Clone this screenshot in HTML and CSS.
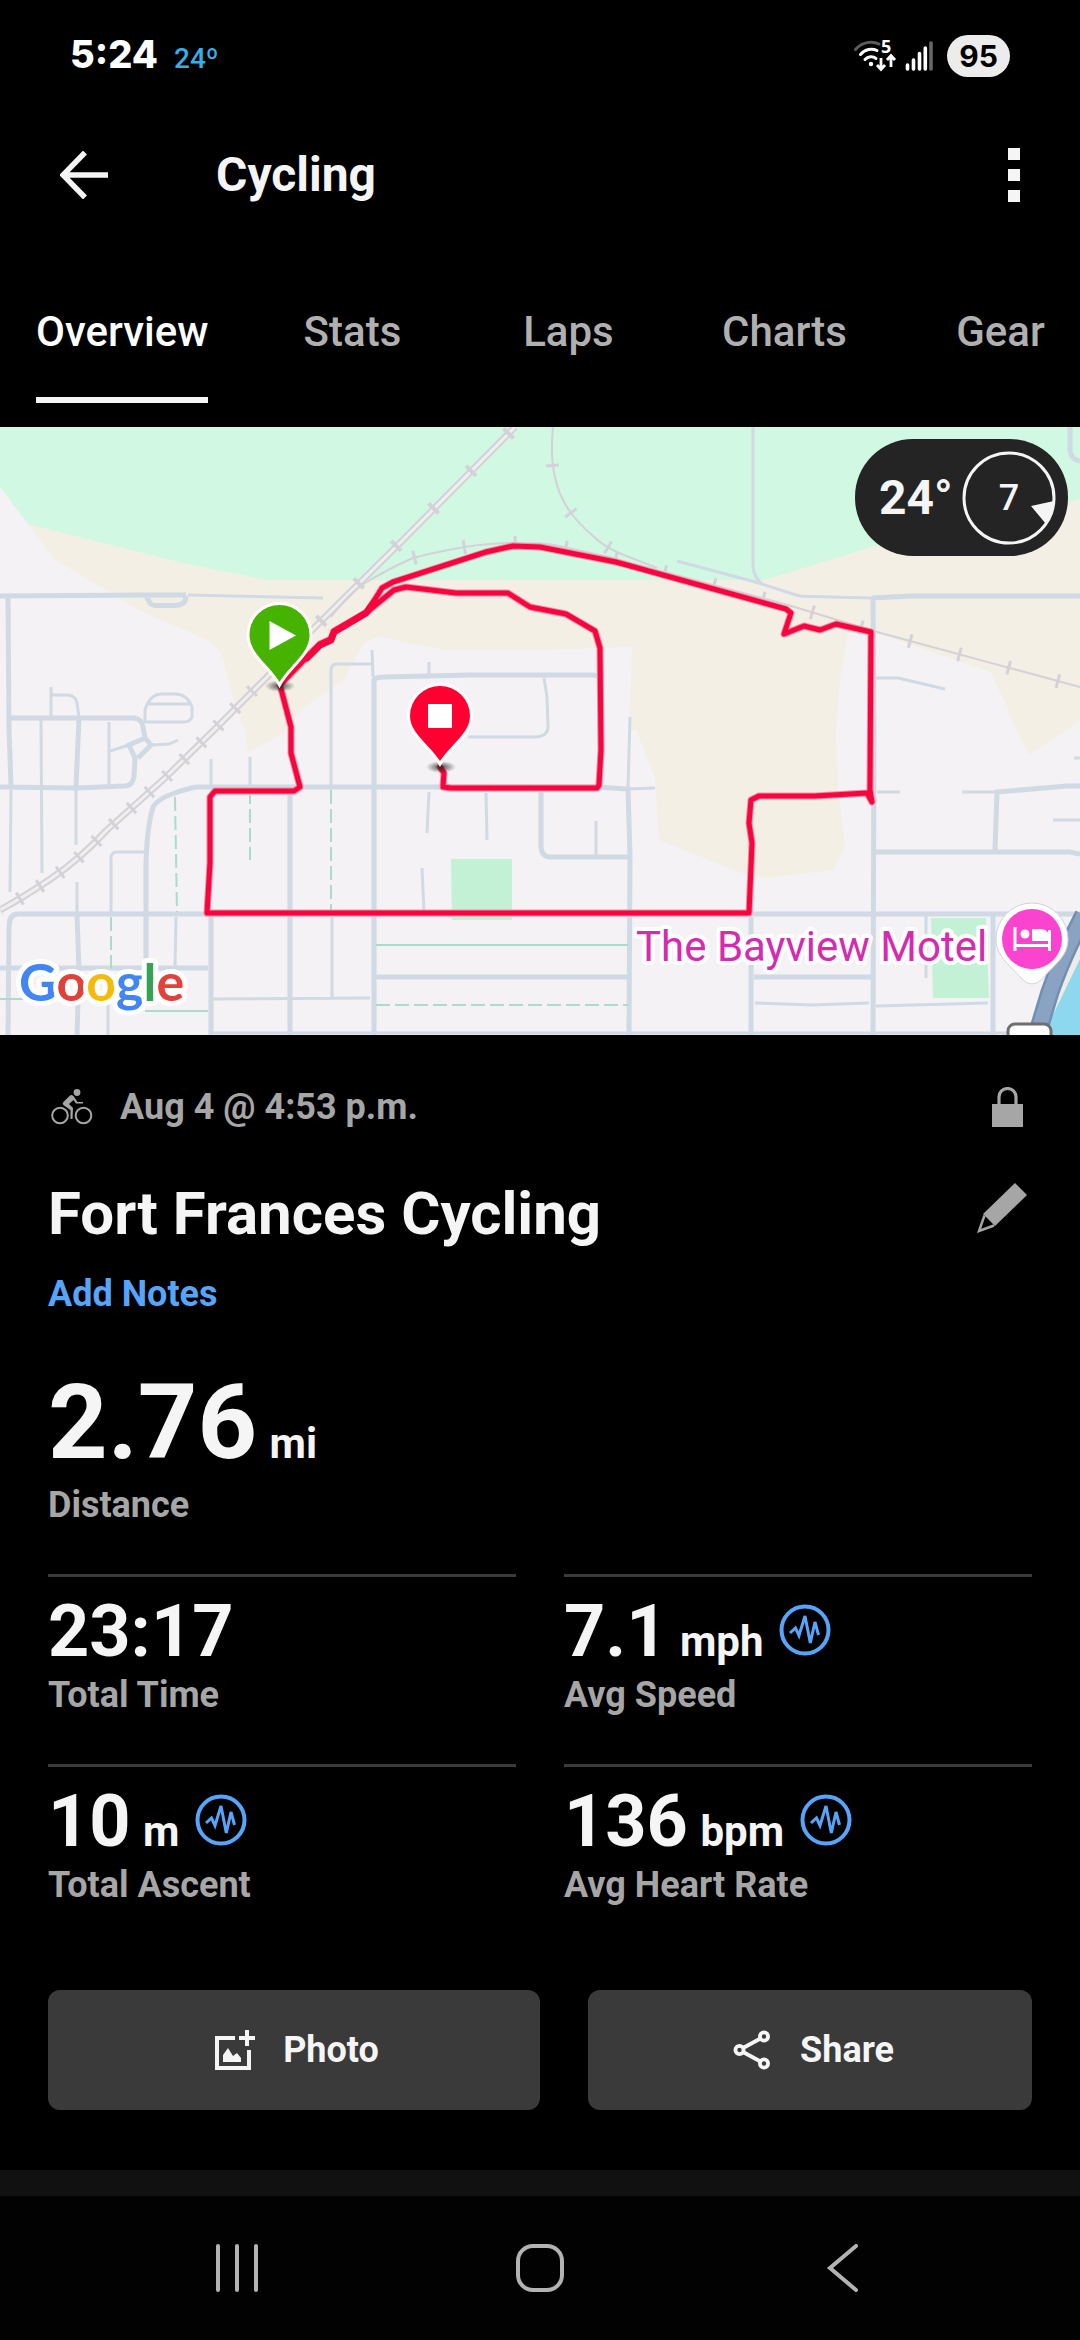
FILE: index.html
```html
<!DOCTYPE html>
<html lang="en">
<head>
<meta charset="utf-8">
<meta name="viewport" content="width=device-width, initial-scale=1">
<title>Cycling</title>
<link rel="stylesheet" href="styles.css">
</head>
<body>
<svg class="defs" aria-hidden="true">
  <symbol id="wave" viewBox="0 0 52 52">
    <circle cx="26" cy="26" r="23.5" fill="none" stroke="currentColor" stroke-width="4"/>
    <path d="M11 29l5.500-5 3.500 7.500L26 12l5.300 27 4.700-21 3.500 13" fill="none" stroke="currentColor" stroke-width="3" stroke-linejoin="miter" stroke-miterlimit="3"/>
  </symbol>
</svg>

<div class="status-bar">
  <div class="status-left">
    <span class="clock">5:24</span>
    <span class="status-temp">24º</span>
  </div>
  <div class="status-right">
    <svg class="wifi" viewBox="0 0 42 32" aria-hidden="true">
      <path d="M1.500 9.500C8 2 18 .5 25 4" fill="none" stroke="#5c5c5c" stroke-width="3" stroke-linecap="round"/>
      <g fill="none" stroke="#fff" stroke-width="3" stroke-linecap="round">
        <path d="M6.500 14.500C11 9 18 8 23 10.500"/>
        <path d="M11 19.500c3-3.500 8-3.500 11-1"/>
      </g>
      <circle cx="17" cy="24" r="2.200" fill="#fff"/>
      <path d="M27 18v11m-4-4l4 4.500 4-4.500M37 27V16m-4 4l4-4.500 4 4.500" fill="none" stroke="#fff" stroke-width="2.800"/>
      <text class="wifi-band" x="27" y="13">5</text>
    </svg>
    <svg class="signal" viewBox="0 0 28 30" aria-hidden="true">
      <path d="M2.500 24v4M8.500 19v9M14.500 12.500V28M20.300 7v21" stroke="#fff" stroke-width="3.600" stroke-linecap="round"/>
      <path d="M26 2v26" stroke="#666" stroke-width="3.600" stroke-linecap="round"/>
    </svg>
    <span class="battery">95</span>
  </div>
</div>

<header class="app-bar">
  <button class="icon-button" type="button" aria-label="Back">
    <svg class="icon-back" viewBox="0 0 48 48"><path d="M25 1.500L3 24l22 22.500M3 24h45" fill="none" stroke="currentColor" stroke-width="5.500"/></svg>
  </button>
  <h1 class="screen-title">Cycling</h1>
  <button class="icon-button" type="button" aria-label="More options">
    <svg class="icon-more" viewBox="0 0 12 54"><path d="M0 0h12v12H0zM0 21h12v12H0zM0 42h12v12H0z" fill="currentColor"/></svg>
  </button>
</header>

<nav class="tabs">
  <a class="tab tab-active" href="#overview" aria-current="page"><span class="tab-label">Overview</span></a>
  <a class="tab" href="#stats"><span class="tab-label">Stats</span></a>
  <a class="tab" href="#laps"><span class="tab-label">Laps</span></a>
  <a class="tab" href="#charts"><span class="tab-label">Charts</span></a>
  <a class="tab" href="#gear"><span class="tab-label">Gear</span></a>
</nav>

<main id="overview">
  <section class="map" aria-label="Route map">
    <svg class="map-canvas" viewBox="0 0 1080 608">
      <defs>
        <radialGradient id="shadow"><stop offset="0" stop-color="#222" stop-opacity=".8"/><stop offset="1" stop-color="#222" stop-opacity="0"/></radialGradient>
      </defs>
      <rect width="1080" height="608" fill="#f4f2f4"/>
      <!-- land cover -->
      <path fill="#f4efe4" d="M28 97L55 133 103 161 138 183 203 211 Q220 220 224 236L234 276 245 303 248 325 289 303 300 283 344 253 358 226Q366 212 379 210L444 223H540L632 220 629 303H636L655 350 659 413 747 448 767 451 833 443 845 420 838 360 836 303 840 253 848 206H876L991 245 1017 303 1029 328 1067 303 1080 293V60H872L764 140H275L183 130Z"/>
      <path fill="#d1f8e2" d="M0 0H1080V72L872 120 764 153H290Q275 154 262 152L183 136 28 97 0 60Z"/>
      <path fill="#c3f1d5" d="M451 432H512V493H452ZM931 491H986L989 571H933Z"/>
      <!-- narrow streets -->
      <g class="street-thin">
        <path d="M188 168L323 171M51 260V290M51 268H68Q76 269 77 276L79 290M145 296V283Q150 267 162 267H176Q188 268 192 280V290Q190 295 184 295H145M146 277H190"/>
        <path d="M76 360V418M41 293L42 446M109 295V358M11 363L10 465M151 318L169 317 178 313M129 318L110 324"/>
        <path d="M331 358V243Q331 237 337 237H372M372 223L373 250M429 235V248M626 362L655 361M211 332V358M250 330V360"/>
        <path d="M77 455V487M144 425H117Q111 425 111 431V485M176 490L175 540M332 490V570M212 572L370 571M108 576V608"/>
        <path d="M429 365L427 406M486 366L487 413M422 441L424 485M596 394V430M630 290L628 361M468 310H536Q548 309 548 300L547 270 544 251"/>
        <path d="M677 134L759 156 796 168Q803 170 812 169.500L872 171M753 0V140Q754 150 761 156M876 251H898L945 262M877 365H900M962 365H996"/>
        <path d="M1053 393H1080M1074 331H1080M755 576L812 578 869 576M876 579L988 576M926 487V551M211 606H1080"/>
      </g>
      <!-- wide streets -->
      <g class="street">
        <path d="M0 169L150 168H186M146 169L150 176Q151 178 155 178.500H175Q186 178 186 169M8 169L9 303 11 358M10 291H134Q142 292 143 300L145 311 151 318 138 331M145 311L129 318 135 331 134 350Q132 359 125 359L76 361 0 360M79 291L76 360"/>
        <path d="M374 608V253Q376 250 384 250L470 248H593Q600 249 602 251M146 541V436Q147 400 153 380Q158 372 172 367T196 360H597L628 362 630 430 629 608"/>
        <path d="M8 608L9 500Q9 487 18 487H207M77 488L79 543 77 608M0 541H208M290 361V608M211 487V608M374 550H628M541 365V420Q542 430 550 430H628"/>
        <path d="M873 171L874 303 873 608M872 171L912 169H1080M1070 0V23Q1071 33 1080 34M995 423L997 365 1067 359H1080M876 425H1070L1080 427M751 490V608M993 487V608M754 550H871M750 487H1080"/>
      </g>
      <!-- trails -->
      <path d="M175 370L177 485M250 363V433M331 363V485M111 490V541M376 578H628" fill="none" stroke="#a9dcc9" stroke-width="2" stroke-dasharray="14 5"/>
      <path d="M376 518H628M145 584H208M0 572H62" fill="none" stroke="#a9dcc9" stroke-width="2"/>
      <!-- railways -->
      <path class="rail" stroke-width="7" d="M515 0L401 115 312 203 267 250 212 305 165 351 107 403Q80 432 52 451T0 483"/>
      <path d="M515 0L401 115 312 203 267 250 212 305 165 351 107 403Q80 432 52 451T0 483" fill="none" stroke="#eef0ee" stroke-width="3"/>
      <g class="rail" stroke-width="2">
        <path d="M331 190Q350 165 365 156 388 142 413 131 440 124 465 120T517 116 554 118L609 130 657 143 788 178 877 205 1080 260"/>
        <path d="M553 0Q550 30 555 50 559 70 571 86 580 98 592 108 603 119 619 126L657 141"/>
      </g>
      <g class="rail" stroke-width="14">
        <path d="M510 5L315 200" stroke-dasharray="4 49"/>
        <path d="M253 263L212 305 165 351 107 403Q80 432 52 451T0 483" stroke-dasharray="3 21"/>
        <path d="M413 131Q440 124 465 120T517 116 554 118L609 130 657 143 788 178 877 205 1080 260" stroke-dasharray="3 48"/>
        <path d="M555 50Q559 70 571 86 580 98 592 108 603 119 619 126" stroke-dasharray="3 48" stroke-dashoffset="-38"/>
        <path d="M546 39L559 38" stroke-width="3"/>
      </g>
      <!-- river and bridge road -->
      <path fill="#f0ebe3" d="M1080 510V540L1046 608H1040Z"/>
      <path fill="#8dd8ee" d="M1080 532V608H1043L1050 594Z"/>
      <path d="M1084 488Q1062 530 1050 565L1037 608" fill="none" stroke="#6f8fb4" stroke-width="19"/>
      <path d="M1084 488Q1062 530 1050 565L1037 608" fill="none" stroke="#8ba3c3" stroke-width="14"/>
      <rect x="1008" y="597" width="43" height="30" rx="7" fill="#fff" stroke="#6f6f70" stroke-width="3"/>
      <!-- recorded route -->
      <g fill="none" stroke-linejoin="round" stroke-linecap="round">
        <path stroke="#f98aa5" stroke-width="7" d="M280 258L291 300V326L300 360 294 364H215L210 370V436L207 486H749L752 416 749 396 751 373 759 369H815L867 366 872 375 870 363 871 205 836 197 820 203 804 199 784 207 791 186 786 182 616 135 540 120 513 119 486 125 393 155 382 161 367 185 334 204 331 212 320 217 307 230 280 258M367 185L394 163 406 160 456 166 508 166 530 180 566 187 595 204 600 221 601 323 599 358 597 361H451L443 360 444 346 440 340"/>
        <path stroke="#f5063e" stroke-width="5" d="M280 258L291 300V326L300 360 294 364H215L210 370V436L207 486H749L752 416 749 396 751 373 759 369H815L867 366 872 375 870 363 871 205 836 197 820 203 804 199 784 207 791 186 786 182 616 135 540 120 513 119 486 125 393 155 382 161 367 185 334 204 331 212 320 217 307 230 280 258M367 185L394 163 406 160 456 166 508 166 530 180 566 187 595 204 600 221 601 323 599 358 597 361H451L443 360 444 346 440 340"/>
        <path stroke="#f5063e" stroke-width="7" d="M375 174L366 186 334 205 331 213 320 218 307 231"/>
      </g>
      <!-- start and finish markers -->
      <ellipse cx="280" cy="259" rx="15" ry="6" fill="url(#shadow)"/>
      <path d="M279.500 258C270 240 248 228 248 208A31.500 31.500 0 0 1 311 208C311 228 289 240 279.500 258Z" fill="#45b300" stroke="#fff" stroke-width="3"/>
      <path d="M269.500 194V223L296 208.500Z" fill="#fff"/>
      <ellipse cx="441" cy="340" rx="15" ry="6" fill="url(#shadow)"/>
      <path d="M440 337C430.500 320 408.500 308 408.500 289A31.500 31.500 0 0 1 471.500 289C471.500 308 449.500 320 440 337Z" fill="#ff0030" stroke="#fff" stroke-width="3"/>
      <path d="M428 277H452V301H428Z" fill="#fff"/>
      <!-- place label -->
      <path d="M1032 476a36 36 0 0 1 36 36c0 17-12 24-25 39q-11 12-22 0c-13-15-25-22-25-39a36 36 0 0 1 36-36Z" fill="#fff" stroke="#cfd3d8" stroke-width="1"/>
      <circle cx="1032" cy="512" r="30" fill="#fa43ce"/>
      <path d="M1015 500V524M1015 518.500H1049M1049.500 503V524" stroke="#fff" stroke-width="3" fill="none"/>
      <circle cx="1025" cy="507" r="4.500" fill="#fff"/>
      <path d="M1032 502H1042Q1050 503 1050 514H1032Z" fill="#fff"/>
      <text class="place-name" x="636" y="534">The Bayview Motel</text>
      <text class="map-brand" x="19" y="574"><tspan fill="#4285f4">G</tspan><tspan fill="#e0413a">o</tspan><tspan fill="#f5bb0b">o</tspan><tspan fill="#4285f4">g</tspan><tspan fill="#34a353">l</tspan><tspan fill="#e0413a">e</tspan></text>
    </svg>
    <div class="weather">
      <span class="weather-temp">24°</span>
      <span class="wind">
        <svg class="wind-dial" viewBox="0 0 94 94" aria-hidden="true">
          <circle cx="47" cy="47" r="45" fill="none" stroke="#f5f5f5" stroke-width="3"/>
          <path d="M69 55L92 50Q91 63 84 73Z" fill="#f5f5f5"/>
        </svg>
        <span class="wind-speed">7</span>
      </span>
    </div>
  </section>

  <section class="summary">
    <div class="date-row">
      <svg class="icon-bike" viewBox="0 0 42 36" aria-hidden="true">
        <g fill="none" stroke="currentColor" stroke-width="2"><circle cx="9" cy="26.500" r="7.800"/><circle cx="32.500" cy="26.500" r="7.800"/></g>
        <circle cx="26" cy="3.500" r="3.400" fill="currentColor"/>
        <path d="M19 6.500L12 13.500Q11 15 13 16.500L19.500 21V30H21.500L22 19 18 15 22.500 11 25 14.500H32V13H26.500L22.500 7Q20.500 5.500 19 6.500Z" fill="currentColor"/>
      </svg>
      <time class="date">Aug 4 @ 4:53 p.m.</time>
      <svg class="icon-lock" viewBox="0 0 31 40" role="img" aria-label="Private">
        <path d="M0 17H31V40H0Z" fill="currentColor"/>
        <path d="M7 18V10a8.500 8.500 0 0 1 17 0v8" fill="none" stroke="currentColor" stroke-width="3.200"/>
      </svg>
    </div>
    <div class="title-row">
      <h2 class="activity-title">Fort Frances Cycling</h2>
      <button class="icon-button" type="button" aria-label="Edit title">
        <svg class="icon-edit" viewBox="0 0 50 50">
          <path d="M38 0L50 12 18 43 6 31Z" fill="currentColor"/>
          <path d="M7.500 32.500L2 48 17 42.500" fill="none" stroke="currentColor" stroke-width="2.500"/>
        </svg>
      </button>
    </div>
    <a class="add-notes" href="#notes">Add Notes</a>

    <div class="distance">
      <div class="value value-large">2.76<span class="unit"> mi</span></div>
      <div class="label">Distance</div>
    </div>

    <div class="stats-grid">
      <div class="stat">
        <div class="value">23:17</div>
        <div class="label">Total Time</div>
      </div>
      <div class="stat">
        <div class="value">7.1<span class="unit"> mph</span><svg class="icon-wave"><use href="#wave"/></svg></div>
        <div class="label">Avg Speed</div>
      </div>
      <div class="stat">
        <div class="value">10<span class="unit"> m</span><svg class="icon-wave"><use href="#wave"/></svg></div>
        <div class="label">Total Ascent</div>
      </div>
      <div class="stat">
        <div class="value">136<span class="unit"> bpm</span><svg class="icon-wave"><use href="#wave"/></svg></div>
        <div class="label">Avg Heart Rate</div>
      </div>
    </div>

    <div class="actions">
      <button class="action" type="button">
        <svg class="icon-action" viewBox="0 0 40 40" aria-hidden="true">
          <path d="M20 8H2V38H34V20M32 0V16M24 8H40" fill="none" stroke="currentColor" stroke-width="4"/>
          <path d="M8 32V25L13 18 18 26 22 23 26 28V32Z" fill="currentColor"/>
        </svg>
        Photo
      </button>
      <button class="action" type="button">
        <svg class="icon-action" viewBox="0 0 40 40" aria-hidden="true">
          <g fill="none" stroke="currentColor" stroke-width="3.800"><circle cx="7.500" cy="20" r="4.100"/><circle cx="32" cy="6.500" r="4.100"/><circle cx="32" cy="33.500" r="4.100"/><path d="M11 18L28.500 8.500M11 22L28.500 31.500"/></g>
        </svg>
        Share
      </button>
    </div>
  </section>
</main>

<div class="section-gap"></div>

<nav class="system-nav" aria-label="System">
  <button class="nav-button" type="button" aria-label="Recent apps">
    <svg class="icon-nav" viewBox="0 0 48 48"><path d="M5 2V46M24 2V46M43 2V46" stroke="currentColor" stroke-width="4" stroke-linecap="round"/></svg>
  </button>
  <button class="nav-button" type="button" aria-label="Home">
    <svg class="icon-nav" viewBox="0 0 48 48"><rect x="2" y="2" width="44" height="44" rx="15" fill="none" stroke="currentColor" stroke-width="4"/></svg>
  </button>
  <button class="nav-button" type="button" aria-label="Back">
    <svg class="icon-nav" viewBox="0 0 48 48"><path d="M37 2L11 24 37 46" fill="none" stroke="currentColor" stroke-width="4" stroke-linecap="round"/></svg>
  </button>
</nav>
</body>
</html>
```
FILE: styles.css
```css
* {
  box-sizing: border-box;
}

body {
  margin: 0;
  background: #000;
  color: #f5f5f5;
  font-family: Roboto, "Liberation Sans", sans-serif;
  font-size: 36px;
  line-height: 42px;
}

h1,
h2 {
  margin: 0;
}

a {
  text-decoration: none;
}

button {
  padding: 0;
  border: 0;
  background: none;
  color: inherit;
  font: inherit;
}

svg {
  display: block;
}

.defs {
  position: absolute;
  width: 0;
  height: 0;
}

/* Status bar */
.status-bar {
  display: flex;
  justify-content: space-between;
  align-items: center;
  height: 112px;
  padding: 0 70px;
}

.status-left {
  display: flex;
  align-items: baseline;
  gap: 16px;
}

.clock {
  color: #fff;
  font-family: Inter, sans-serif;
  font-size: 38px;
  font-weight: 800;
}

.status-temp {
  color: #38aee6;
  font-size: 28px;
  font-weight: 500;
}

.status-right {
  display: flex;
  align-items: center;
}

.wifi {
  width: 42px;
  height: 32px;
  overflow: visible;
}

.wifi-band {
  fill: #fff;
  font-family: "Noto Sans", sans-serif;
  font-size: 18px;
  font-weight: 700;
}

.signal {
  width: 28px;
  height: 30px;
  margin: 0 14px 0 9px;
}

.battery {
  width: 63px;
  border-radius: 21px;
  background: #ececec;
  color: #000;
  font-family: Inter, sans-serif;
  font-size: 30px;
  font-weight: 700;
  text-align: center;
}

/* App bar */
.app-bar {
  display: flex;
  align-items: center;
  height: 126px;
  padding: 0 60px;
}

.icon-back {
  width: 48px;
  height: 48px;
}

.screen-title {
  flex: 1;
  margin-left: 108px;
  font-size: 48px;
  font-weight: 700;
  line-height: 60px;
}

.icon-more {
  width: 12px;
  height: 54px;
}

/* Tabs */
.tabs {
  display: flex;
  padding-bottom: 24px;
  overflow: hidden;
}

.tab {
  display: flex;
  flex: none;
  justify-content: center;
  min-width: 216px;
  padding: 0 36px;
  color: #b0b0b0;
  font-size: 42px;
  font-weight: 500;
  line-height: 48px;
}

.tab-label {
  padding: 70px 0 41px;
  border-bottom: 6px solid transparent;
}

.tab-active {
  color: #fff;
}

.tab-active .tab-label {
  border-color: #f5f5f5;
}

/* Map */
.map {
  position: relative;
}

.map-canvas {
  width: 100%;
  height: auto;
}

.street,
.street-thin {
  fill: none;
  stroke: #d0dae4;
  stroke-width: 5;
}

.street-thin {
  stroke-width: 3;
}

.rail {
  fill: none;
  stroke: #d4d1d8;
}

.place-name {
  fill: #d42bb0;
  stroke: #fff;
  stroke-width: 8;
  stroke-linejoin: round;
  paint-order: stroke;
  font-size: 42px;
}

.map-brand {
  stroke: #fff;
  stroke-width: 10;
  stroke-linejoin: round;
  paint-order: stroke;
  font-family: Lato, sans-serif;
  font-size: 52px;
  font-weight: 700;
}

.weather {
  position: absolute;
  top: 12px;
  right: 12px;
  display: flex;
  align-items: center;
  justify-content: space-between;
  width: 213px;
  height: 117px;
  padding: 0 12px 0 24px;
  border-radius: 58px;
  background: #242424;
}

.weather-temp {
  font-size: 48px;
  font-weight: 700;
}

.wind {
  position: relative;
  display: grid;
  place-items: center;
}

.wind-dial {
  width: 94px;
  height: 94px;
}

.wind-speed {
  position: absolute;
  font-size: 36px;
  font-weight: 500;
}

/* Activity summary */
.summary {
  padding: 48px 48px 60px;
}

.date-row {
  display: flex;
  align-items: center;
  height: 48px;
  padding: 0 9px 0 3px;
  color: #a6a6a6;
}

.icon-bike {
  width: 42px;
  height: 36px;
}

.date {
  flex: 1;
  margin-left: 27px;
  font-weight: 700;
}

.icon-lock {
  width: 31px;
  height: 40px;
}

.title-row {
  display: flex;
  align-items: center;
  justify-content: space-between;
  margin-top: 47px;
  padding-right: 5px;
}

.title-row .icon-button {
  padding-bottom: 12px;
}

.activity-title {
  font-size: 60px;
  font-weight: 700;
  line-height: 72px;
}

.icon-edit {
  width: 50px;
  height: 50px;
  color: #a6a6a6;
}

.add-notes {
  display: block;
  margin-top: 23px;
  color: #57a5fa;
  font-weight: 700;
}

.distance {
  margin-top: 47px;
}

.value {
  font-size: 72px;
  font-weight: 700;
  line-height: 84px;
  white-space: nowrap;
}

.value-large {
  font-size: 104px;
  line-height: 122px;
}

.unit {
  margin-left: 2px;
  font-size: 42px;
  line-height: 42px;
}

.label {
  color: #a6a6a6;
  font-weight: 700;
}

.icon-wave {
  display: inline-block;
  width: 52px;
  height: 52px;
  margin-left: 16px;
  color: #57a5fa;
  vertical-align: baseline;
}

.stats-grid {
  display: grid;
  grid-template-columns: 1fr 1fr;
  column-gap: 48px;
  margin-top: 48px;
}

.stat {
  padding: 13px 0 48px;
  border-top: 3px solid #3a3a3a;
}

.actions {
  display: grid;
  grid-template-columns: 41fr 37fr;
  gap: 48px;
  margin-top: 36px;
}

.action {
  display: flex;
  align-items: center;
  justify-content: center;
  gap: 28px;
  height: 120px;
  padding-left: 6px;
  border-radius: 12px;
  background: #3a3a3a;
  font-weight: 700;
}

.icon-action {
  width: 40px;
  height: 40px;
}

.section-gap {
  height: 26px;
  background: #111;
}

/* System navigation */
.system-nav {
  display: flex;
  height: 144px;
  padding: 0 86px;
  background: #020202;
  color: #b3b3b3;
}

.nav-button {
  display: grid;
  flex: 1;
  place-items: center;
}

.icon-nav {
  width: 48px;
  height: 48px;
}
```
